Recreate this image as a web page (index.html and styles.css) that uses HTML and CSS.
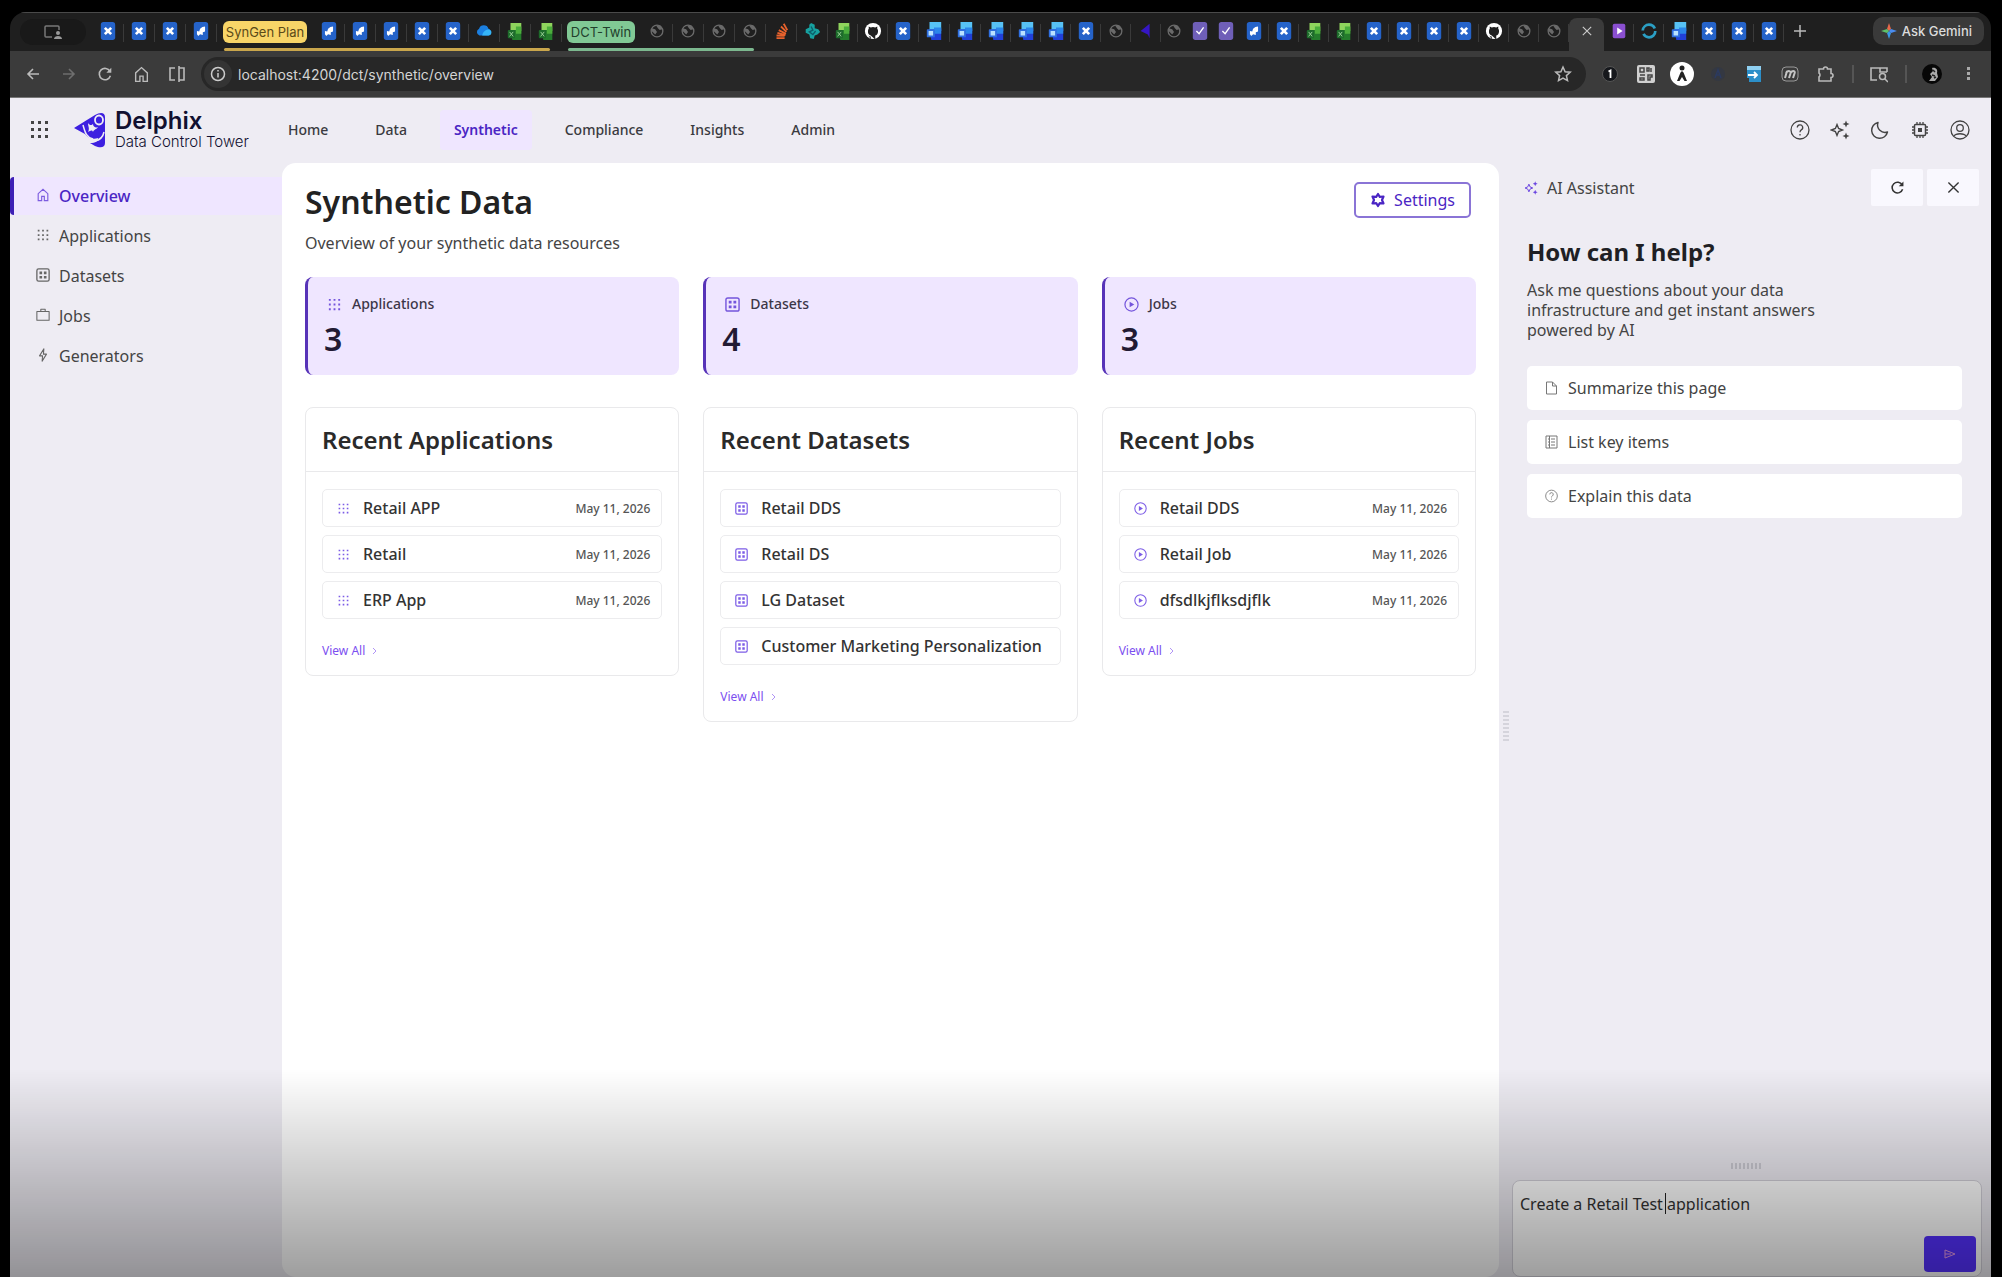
FILE: index.html
```html
<!DOCTYPE html>
<html lang="en">
<head>
  <meta charset="UTF-8">
  <meta name="viewport" content="width=device-width, initial-scale=1.0">
  <title>Synthetic Data</title>
  <link rel="stylesheet" href="styles.css">
</head>
<body>
  <svg class="sprite" aria-hidden="true">
    <symbol id="confluence" viewBox="0 0 20 20"><rect x="2" y="0" width="16" height="20" rx="3" fill="#2563c9"/><path d="M6.500 6.500l7 7M13.500 6.500l-7 7" stroke="#fff" stroke-width="3"/></symbol>
    <symbol id="jira" viewBox="0 0 20 20"><rect x="2" y="0" width="16" height="20" rx="3" fill="#2563c9"/><path d="M14.500 5v5.500l-2.500 1v3l-3-1-2 2-1.500-2v-3.500l2.500.5 1-3 2.500-2z" fill="#fff"/></symbol>
    <symbol id="cloud" viewBox="0 0 20 20"><path d="M5 15a4 4 0 0 1-.5-7.500A5.500 5.500 0 0 1 15 7.500 4 4 0 0 1 15 15z" fill="#1b7fe0"/><path d="M8 15c1-5 5-7 8.500-6.500A3.500 3.500 0 0 1 15.500 15z" fill="#35b4f7"/></symbol>
    <symbol id="sheet" viewBox="0 0 20 20"><path d="M5 1h12v9H5z" fill="#8fd45d"/><path d="M5 9h12v11H7z" fill="#247c2c"/><path d="M11 5h6v8h-6z" fill="#4cae3d"/><rect x="2" y="9" width="8" height="9" rx="1" fill="#1d6b2b"/><path d="M4 11l4 5M8 11l-4 5" stroke="#a5d8a0"/></symbol>
    <symbol id="outlook" viewBox="0 0 20 20"><path d="M5 0h13v10H5z" fill="#57c2f5"/><path d="M5 8h13v12H7z" fill="#2140d8"/><path d="M10 6h8v7h-8z" fill="#2b86ea"/><rect x="2" y="8" width="9" height="9" rx="1" fill="#2f6fe0"/><path d="M4 10h5v5H4z" fill="#b9e2ff"/></symbol>
    <symbol id="globe" viewBox="0 0 20 20"><circle cx="10" cy="10" r="6.500" fill="none" stroke="#6a6a6a" stroke-width="1.500"/><path d="M4 7l4 1 2 3-2 3-2-2-2-2zM9 4l5 0 2 4-3 1-2-2z" fill="#6a6a6a"/></symbol>
    <symbol id="stack" viewBox="0 0 20 20"><path d="M5 18h9M5 15l9 .5M6 12l9 2.500M7.500 9l8 4M10 5l6 6M13 2l4 7" stroke="#e8622c" stroke-width="2"/></symbol>
    <symbol id="hex" viewBox="0 0 20 20"><path d="M9 1l4 2v4l4 1 2 3-3 3-3 1-1 4-4-1-1-4-4-2V8l4-2V3z" fill="#17a2a0"/><path d="M9 5l2 4-4 2 4 3 3-4" fill="none" stroke="#0c5f6b" stroke-width="1.500"/></symbol>
    <symbol id="github" viewBox="0 0 20 20"><circle cx="10" cy="10" r="9" fill="#fff"/><path d="M7.500 19.500v-3.500c-2 .3-2.500-1-3-1.700M7.500 15C5 14.500 4 12.500 4.500 9.500c0-1 .5-1.500.8-2L5.200 5l2.300 1a9 9 0 0 1 5 0L14.800 5l-.1 2.500c1 1 1.200 3 .6 4.700-.5 1.600-1.500 2.400-2.800 2.800v4.500z" fill="#1f1f1f"/></symbol>
    <symbol id="delphix" viewBox="0 0 20 20"><path d="M14 2v16L12 14 4 10z" fill="#3516c4"/></symbol>
    <symbol id="check" viewBox="0 0 20 20"><rect x="2" y="0" width="16" height="20" rx="3" fill="#6f5fb8"/><path d="M6 10l3 3 5-7" fill="none" stroke="#fff" stroke-width="1.500"/></symbol>
    <symbol id="play-tab" viewBox="0 0 20 20"><rect x="3" y="2" width="14" height="16" rx="2" fill="#8a4fd0"/><path d="M8 6l6 4-6 4z" fill="#fff"/></symbol>
    <symbol id="ring" viewBox="0 0 20 20"><circle cx="10" cy="10" r="7" fill="none" stroke="#2b9fc4" stroke-width="3" stroke-dasharray="18 4"/></symbol>
    <symbol id="dots" viewBox="0 0 16 16"><path d="M2 2h2v2H2zM7 2h2v2H7zM12 2h2v2h-2zM2 7h2v2H2zM7 7h2v2H7zM12 7h2v2h-2zM2 12h2v2H2zM7 12h2v2H7zM12 12h2v2h-2z" fill="currentColor"/></symbol>
    <symbol id="dataset" viewBox="0 0 16 16"><rect x="1" y="1" width="14" height="14" rx="2" fill="none" stroke="currentColor" stroke-width="1.500"/><path d="M4 4h3v3H4zM9 4h3v3H9zM4 9h3v3H4zM9 9h3v3H9z" fill="currentColor"/></symbol>
    <symbol id="play" viewBox="0 0 16 16"><circle cx="8" cy="8" r="7" fill="none" stroke="currentColor" stroke-width="1.300"/><path d="M6 5l5 3-5 3z" fill="currentColor"/></symbol>
    <symbol id="home" viewBox="0 0 16 16"><path d="M2.500 14.500V6.500L8 1.500l5.500 5v8h-4v-5h-3v5z" fill="none" stroke="currentColor" stroke-width="1.300"/></symbol>
    <symbol id="briefcase" viewBox="0 0 16 16"><path d="M1 4h14v10H1zM5.500 4V1.500h5V4" fill="none" stroke="currentColor" stroke-width="1.200" stroke-linejoin="round"/></symbol>
    <symbol id="bolt" viewBox="0 0 16 16"><path d="M9 1L4 9h3.500L7 15l5-8H8.500z" fill="none" stroke="currentColor" stroke-width="1.200" stroke-linejoin="round"/></symbol>
    <symbol id="sparkle" viewBox="0 0 20 20"><path d="M7 4.500l1.600 3.900L12.500 10l-3.900 1.600L7 15.500l-1.600-3.900L1.500 10l3.900-1.600z" fill="none" stroke="currentColor" stroke-width="1.400"/><path d="M16 .5l1 2.500 2.500 1L17 5l-1 2.500L15 5l-2.500-1L15 3zM16 12.500l1 2.500 2.500 1-2.500 1-1 2.500-1-2.500-2.500-1 2.500-1z" fill="currentColor"/></symbol>
    <symbol id="help" viewBox="0 0 20 20"><circle cx="10" cy="10" r="9" fill="none" stroke="currentColor" stroke-width="1.300"/><path d="M7.300 7.500a2.700 2.700 0 1 1 4 2.400c-1 .6-1.300 1-1.300 2.300M10 14v1.600" fill="none" stroke="currentColor" stroke-width="1.300"/></symbol>
    <symbol id="reload" viewBox="0 0 20 20"><path d="M15.500 7A6.300 6.300 0 1 0 16 12" fill="none" stroke="currentColor" stroke-width="1.800"/><path d="M17 3v5.500h-5.500z" fill="currentColor"/></symbol>
    <symbol id="close" viewBox="0 0 20 20"><path d="M4 4l12 12M16 4L4 16" fill="none" stroke="currentColor" stroke-width="1.600"/></symbol>
  </svg>

  <div class="window">
    <div class="tab-strip">
      <button class="tab-search" aria-label="Shared tab"><svg width="18" height="16" viewBox="0 0 18 16"><path d="M8 13H2a1 1 0 0 1-1-1V3a1 1 0 0 1 1-1h12a1 1 0 0 1 1 1v3" fill="none" stroke="#777" stroke-width="1.500"/><circle cx="14" cy="9" r="2" fill="#999"/><path d="M10 15c0-4 8-4 8 0z" fill="#999"/></svg></button>
      <div class="tab-group" data-tabs="confluence confluence confluence jira"></div>
      <button class="chip chip-yellow">SynGen Plan</button>
      <div class="tab-group group-yellow" data-tabs="jira jira jira confluence confluence cloud sheet sheet"></div>
      <button class="chip chip-green">DCT-Twin</button>
      <div class="tab-group group-green" data-tabs="globe globe globe globe"></div>
      <div class="tab-group" data-tabs="stack hex"></div>
      <div class="tab-group slim" data-tabs="sheet github"></div>
      <div class="tab-group" data-tabs="confluence outlook outlook"></div>
      <div class="tab-group slim" data-tabs="outlook outlook outlook confluence globe delphix"></div>
      <div class="tab-group tight" data-tabs="globe check check"></div>
      <div class="tab-group slim" data-tabs="jira confluence sheet sheet confluence confluence confluence confluence github globe globe"></div>
      <button class="tab-active" aria-label="Close tab"><svg width="14" height="14"><use href="#close"/></svg></button>
      <div class="tab-group slim" data-tabs="play-tab ring outlook confluence confluence confluence"></div>
      <button class="tab-new" aria-label="New tab"><svg width="16" height="16" viewBox="0 0 16 16"><path d="M8 2v12M2 8h12" stroke="#bbb" stroke-width="1.500"/></svg></button>
      <button class="gemini"><svg width="16" height="16" viewBox="0 0 16 16"><path d="M8 0l2 6-2 2-2-2z" fill="#e8694a"/><path d="M16 8l-6 2-2-2 2-2z" fill="#4a8cf0"/><path d="M8 16l-2-6 2-2 2 2z" fill="#3a9ae8"/><path d="M0 8l6-2 2 2-2 2z" fill="#5fc06a"/></svg>Ask Gemini</button>
    </div>

    <div class="toolbar">
      <button class="tool" aria-label="Back"><svg width="16" height="16" viewBox="0 0 16 16"><path d="M14 8H3M8 3L3 8l5 5" fill="none" stroke="#bbb" stroke-width="1.600"/></svg></button>
      <button class="tool" aria-label="Forward"><svg width="16" height="16" viewBox="0 0 16 16"><path d="M2 8h11M8 3l5 5-5 5" fill="none" stroke="#6e6e6e" stroke-width="1.600"/></svg></button>
      <button class="tool" aria-label="Reload"><svg width="18" height="18"><use href="#reload"/></svg></button>
      <button class="tool" aria-label="Home"><svg width="17" height="17"><use href="#home"/></svg></button>
      <button class="tool" aria-label="Split view"><svg width="18" height="18" viewBox="0 0 18 18"><path d="M7 3H2v12h5M11 3h5v12h-5zM11 1v16" fill="none" stroke="#bbb" stroke-width="1.600"/></svg></button>
      <div class="address">
        <svg class="site-info" width="28" height="28" viewBox="0 0 28 28"><circle cx="14" cy="14" r="14" fill="#343434"/><circle cx="14" cy="14" r="6.500" fill="none" stroke="#ccc" stroke-width="1.500"/><path d="M14 13v4.500M14 10v1.600" stroke="#ccc" stroke-width="1.500"/></svg>
        <input type="text" aria-label="Address" value="localhost:4200/dct/synthetic/overview">
        <svg width="18" height="18" viewBox="0 0 18 18"><path d="M9 2l2.100 4.700 5.100.5-3.800 3.400 1.100 5L9 13l-4.500 2.600 1.100-5L1.800 7.200l5.100-.5z" fill="none" stroke="#bbb" stroke-width="1.500"/></svg>
      </div>
      <div class="extensions">
        <button class="tool" aria-label="Passwords"><svg width="18" height="18" viewBox="0 0 18 18"><circle cx="9" cy="9" r="7.500" fill="#16181c" stroke="#555"/><path d="M7.500 6.500L9.500 5.500V13" fill="none" stroke="#fff" stroke-width="1.800"/></svg></button>
        <button class="tool" aria-label="QR code"><svg width="18" height="18" viewBox="0 0 18 18"><rect width="18" height="18" rx="2" fill="#d0d0d0"/><path d="M3 3h4v4H3zM10 3h2v3h-2zM14 3v4M3 10h5M3 13h4v2H3zM11 10h4v2h-2v3h-2z" fill="none" stroke="#444" stroke-width="1.500"/></svg></button>
        <button class="tool" aria-label="Accessibility"><svg width="24" height="24" viewBox="0 0 24 24"><circle cx="12" cy="12" r="12" fill="#fff"/><circle cx="12" cy="6" r="2.500" fill="#222"/><path d="M12 9l1.500 1.500L17 19h-2.500L12 15l-2.500 4H7l3.500-8.500z" fill="#222"/></svg></button>
        <button class="tool" aria-label="Authenticator"><svg width="18" height="18" viewBox="0 0 18 18"><circle cx="9" cy="9" r="7" fill="#343842"/><path d="M6 13l3-8 3 8M7 10h4" fill="none" stroke="#2b3a60" stroke-width="1.500"/></svg></button>
        <button class="tool" aria-label="Share page"><svg width="18" height="18" viewBox="0 0 18 18"><path d="M2 1h14v16H4v-4H2z" fill="#2c8fc9"/><path d="M2 1h14v4H2z" fill="#8fd0f2"/><path d="M3 10h9M9 7l3 3-3 3" fill="none" stroke="#fff" stroke-width="1.800"/></svg></button>
        <button class="tool" aria-label="Notes"><svg width="18" height="18" viewBox="0 0 18 18"><rect x="1" y="2" width="16" height="14" rx="4" fill="none" stroke="#999"/><path d="M4 13L6 6M8 13l2-6M12 13l2-6M5 8c2-3 4-2 4.500-1M9.500 8c2-3 4-2 4.500-1" fill="none" stroke="#c4c4c4" stroke-width="2"/></svg></button>
        <button class="tool" aria-label="Extensions"><svg width="18" height="18" viewBox="0 0 18 18"><path d="M2 4h4.500a2 2 0 0 1 4 0H14v4.500a2 2 0 0 1 0 4V16H2v-4a2.500 2.500 0 0 0 0-4z" fill="none" stroke="#bbb" stroke-width="1.600"/></svg></button>
        <span class="divider"></span>
        <button class="tool" aria-label="Search tabs"><svg width="18" height="18" viewBox="0 0 18 18"><path d="M7 15H1V3h16v4M10 3v4h7" fill="none" stroke="#bbb" stroke-width="1.600"/><circle cx="12.500" cy="11.500" r="3" fill="none" stroke="#bbb" stroke-width="1.500"/><path d="M14.500 13.500L18 17" stroke="#bbb" stroke-width="1.500"/></svg></button>
        <span class="divider"></span>
        <button class="tool" aria-label="Profile"><svg width="20" height="20" viewBox="0 0 20 20"><circle cx="10" cy="10" r="10" fill="#070707"/><path d="M10 4c4-1 6 2 5 5l1 4-3 4H7l3-4-2-3 3-3z" fill="#aaa"/><path d="M11 6l2 2M10 11l3 1M12 14l2-1" stroke="#222" stroke-width="1.500"/></svg></button>
        <button class="tool" aria-label="Menu"><svg width="16" height="18" viewBox="0 0 16 18"><path d="M7 2h3v3H7zM7 7h3v3H7zM7 12h3v3H7z" fill="#aaa"/></svg></button>
      </div>
    </div>

    <div class="app">
      <header class="app-header">
        <button class="icon-btn" aria-label="Apps"><svg width="18" height="20" viewBox="0 0 18 20"><path d="M0 1h3v3H0zM7 1h3v3H7zM14 1h3v3h-3zM0 8h3v3H0zM7 8h3v3H7zM14 8h3v3h-3zM0 15h3v3H0zM7 15h3v3H7zM14 15h3v3h-3z" fill="#444"/></svg></button>
        <a class="brand" href="#">
          <svg width="33" height="36" viewBox="0 0 33 36"><path d="M1 16L22 3C27 0 32 0 32 5v26c0 5-5 5-10 3l-5-3c6 0 8-2 8-5-5 2-10 0-13-4z" fill="#3d1fe0"/><path d="M10 13c2 7 3 12 10 14" fill="none" stroke="#eeecf3" stroke-width="1.500"/><ellipse cx="26" cy="8" rx="4" ry="4.500" fill="#3d1fe0" stroke="#eeecf3" stroke-width="1.800"/><path d="M15 11c2 3 4 2 5 1 0 3 3 4 5 3-2 3-4 2-5 5-1-3-3-1-5 0 2-4 0-5 0-9z" fill="#eeecf3"/><path d="M22 29c5-1 8-4 9-9" fill="none" stroke="#eeecf3" stroke-width="1.500"/></svg>
          <span class="brand-text"><span class="brand-name">Delphix</span><span class="brand-sub">Data Control Tower</span></span>
        </a>
        <nav class="top-nav">
          <a href="#">Home</a>
          <a href="#">Data</a>
          <a href="#" class="active">Synthetic</a>
          <a href="#">Compliance</a>
          <a href="#">Insights</a>
          <a href="#">Admin</a>
        </nav>
        <div class="header-icons">
          <button class="icon-btn" aria-label="Help"><svg width="20" height="20"><use href="#help"/></svg></button>
          <button class="icon-btn" aria-label="AI Assistant"><svg width="20" height="20"><use href="#sparkle"/></svg></button>
          <button class="icon-btn" aria-label="Dark mode"><svg width="20" height="20" viewBox="0 0 20 20"><path d="M8 2.500A8 8 0 1 0 17.500 12 7.500 7.500 0 0 1 8 2.500z" fill="none" stroke="currentColor" stroke-width="1.400" stroke-linejoin="round"/></svg></button>
          <button class="icon-btn" aria-label="System"><svg width="20" height="20" viewBox="0 0 20 20"><rect x="4.500" y="4.500" width="11" height="11" rx="1" fill="none" stroke="currentColor" stroke-width="1.500"/><path d="M8 8h4v4H8z" fill="currentColor"/><path d="M7 2v3M10 2v3M13 2v3M7 15v3M10 15v3M13 15v3M2 7h3M2 10h3M2 13h3M15 7h3M15 10h3M15 13h3" stroke="currentColor" stroke-width="1.300"/></svg></button>
          <button class="icon-btn" aria-label="Account"><svg width="20" height="20" viewBox="0 0 20 20"><circle cx="10" cy="10" r="9" fill="none" stroke="currentColor" stroke-width="1.300"/><circle cx="10" cy="8" r="3.300" fill="none" stroke="currentColor" stroke-width="1.300"/><path d="M4 16c2-3 10-3 12 0" fill="none" stroke="currentColor" stroke-width="1.300"/></svg></button>
        </div>
      </header>

      <div class="app-body">
        <nav class="sidebar">
          <a href="#" class="active"><svg width="14" height="14"><use href="#home"/></svg>Overview</a>
          <a href="#"><svg width="14" height="14"><use href="#dots"/></svg>Applications</a>
          <a href="#"><svg width="14" height="14"><use href="#dataset"/></svg>Datasets</a>
          <a href="#"><svg width="14" height="14"><use href="#briefcase"/></svg>Jobs</a>
          <a href="#"><svg width="14" height="14"><use href="#bolt"/></svg>Generators</a>
        </nav>

        <main class="content">
          <div class="page-head">
            <div>
              <h1>Synthetic Data</h1>
              <p class="subtitle">Overview of your synthetic data resources</p>
            </div>
            <button class="settings"><svg width="16" height="18" viewBox="0 0 16 18"><path d="M8 3l1.800 2.800 3.700-.3L12 9l1.500 3.500-3.700-.3L8 15l-1.800-2.800-3.700.3L4 9 2.500 5.500l3.700.3z" fill="none" stroke="currentColor" stroke-width="2.200" stroke-linejoin="round"/></svg>Settings</button>
          </div>

          <div class="grid">
            <div class="stat"><div class="stat-label"><svg width="15" height="15"><use href="#dots"/></svg>Applications</div><div class="stat-value">3</div></div>
            <div class="stat"><div class="stat-label"><svg width="15" height="15"><use href="#dataset"/></svg>Datasets</div><div class="stat-value">4</div></div>
            <div class="stat"><div class="stat-label"><svg width="15" height="15"><use href="#play"/></svg>Jobs</div><div class="stat-value">3</div></div>
          </div>

          <div class="grid recent">
            <section class="card">
              <h2>Recent Applications</h2>
              <ul>
                <li><svg width="13" height="13"><use href="#dots"/></svg>Retail APP<time>May 11, 2026</time></li>
                <li><svg width="13" height="13"><use href="#dots"/></svg>Retail<time>May 11, 2026</time></li>
                <li><svg width="13" height="13"><use href="#dots"/></svg>ERP App<time>May 11, 2026</time></li>
              </ul>
              <a class="view-all" href="#">View All<svg width="6" height="8" viewBox="0 0 6 8"><path d="M1 1l3 3-3 3" fill="none" stroke="currentColor"/></svg></a>
            </section>
            <section class="card">
              <h2>Recent Datasets</h2>
              <ul>
                <li><svg width="13" height="13"><use href="#dataset"/></svg>Retail DDS</li>
                <li><svg width="13" height="13"><use href="#dataset"/></svg>Retail DS</li>
                <li><svg width="13" height="13"><use href="#dataset"/></svg>LG Dataset</li>
                <li><svg width="13" height="13"><use href="#dataset"/></svg>Customer Marketing Personalization</li>
              </ul>
              <a class="view-all" href="#">View All<svg width="6" height="8" viewBox="0 0 6 8"><path d="M1 1l3 3-3 3" fill="none" stroke="currentColor"/></svg></a>
            </section>
            <section class="card">
              <h2>Recent Jobs</h2>
              <ul>
                <li><svg width="13" height="13"><use href="#play"/></svg>Retail DDS<time>May 11, 2026</time></li>
                <li><svg width="13" height="13"><use href="#play"/></svg>Retail Job<time>May 11, 2026</time></li>
                <li><svg width="13" height="13"><use href="#play"/></svg>dfsdlkjflksdjflk<time>May 11, 2026</time></li>
              </ul>
              <a class="view-all" href="#">View All<svg width="6" height="8" viewBox="0 0 6 8"><path d="M1 1l3 3-3 3" fill="none" stroke="currentColor"/></svg></a>
            </section>
          </div>
        </main>

        <div class="resizer"><span class="grip"></span></div>

        <aside class="assistant">
          <div class="assistant-head">
            <svg width="14" height="14"><use href="#sparkle"/></svg>
            <span class="assistant-title">AI Assistant</span>
            <button class="square" aria-label="Restart"><svg width="17" height="17"><use href="#reload"/></svg></button>
            <button class="square" aria-label="Close"><svg width="17" height="17"><use href="#close"/></svg></button>
          </div>
          <div class="assistant-body">
            <h2>How can I help?</h2>
            <p>Ask me questions about your data infrastructure and get instant answers powered by AI</p>
            <button class="prompt"><svg width="13" height="14" viewBox="0 0 13 14"><path d="M1.500 1h6l4 4v8h-10zM7.500 1v4h4" fill="none" stroke="currentColor"/></svg>Summarize this page</button>
            <button class="prompt"><svg width="13" height="14" viewBox="0 0 13 14"><path d="M1 1h11v12H1zM3 4h1M3 7h1M3 10h1M6 4h4M6 7h4M6 10h4M4.500 1v12" fill="none" stroke="currentColor"/></svg>List key items</button>
            <button class="prompt"><svg width="13" height="14"><use href="#help"/></svg>Explain this data</button>
          </div>
          <span class="grip grip-wide"></span>
          <div class="composer">
            <textarea aria-label="Message">Create a Retail Test application</textarea>
            <span class="caret"></span>
            <button class="send" aria-label="Send"><svg width="12" height="10" viewBox="0 0 12 10"><path d="M1 1l10 4L1 9zM1 5h6" fill="none" stroke="#e79ae8"/></svg></button>
          </div>
        </aside>
      </div>
    </div>
  </div>
  <div class="shade"></div>

  <script>
    // fill each tab group from its list of favicons
    document.querySelectorAll('.tab-group').forEach(group => {
      group.innerHTML = group.dataset.tabs.split(' ').map(name =>
        `<button class="tab" aria-label="${name}"><svg width="20" height="20"><use href="#${name}"/></svg></button>`
      ).join('');
    });
  </script>
</body>
</html>
```
FILE: styles.css
```css
* { box-sizing: border-box; }
body { margin: 0; background: #000; color: #2b2b2f; font-family: "Noto Sans", sans-serif; font-size: 16px; padding: 12px 11px 0 10px; height: 100vh; overflow: hidden; }
button { font: inherit; border: none; background: none; padding: 0; color: inherit; cursor: pointer; }
a { color: inherit; text-decoration: none; }
svg { flex: none; display: block; }
.sprite { position: absolute; width: 0; height: 0; }
.window { height: 100%; display: flex; flex-direction: column; border-radius: 16px 16px 0 0; overflow: hidden; background: #1f1f1f; }

/* browser chrome */
.tab-strip { display: flex; height: 39px; border-top: 1px solid #4a4a4a; font-family: Inter, sans-serif; }
.tab-search { width: 66px; height: 26px; margin: 6px 7px 0 10px; border-radius: 13px; background: #191919; display: flex; align-items: center; justify-content: center; }
.tab-group { display: flex; }
.tab { width: 31px; display: flex; align-items: center; justify-content: center; padding-bottom: 3px; border-right: 1px solid #333; border-image: linear-gradient(transparent 30%, #3a3a3a 30%, #3a3a3a 75%, transparent 75%) 1; }
.tab svg { width: 18px; height: 20px; }
.slim .tab { width: 30px; }
.tight .tab { width: 26px; border-color: transparent; border-image: none; }
.group-yellow, .group-green { position: relative; }
.group-yellow::after, .group-green::after { content: ""; position: absolute; bottom: 0; left: -90px; right: 12px; height: 3px; border-radius: 2px; background: #c9a64c; }
.group-green::after { left: -74px; background: #7cb88f; }
.chip { height: 22px; margin-top: 8px; border-radius: 6px; font-size: 13px; line-height: 22px; color: #5b4a18; white-space: nowrap; }
.chip-yellow { width: 84px; margin-left: 6px; margin-right: 7px; background: #f8d568; }
.chip-green { width: 68px; margin-left: 5px; margin-right: 7px; background: #81c995; color: #22402c; }
.tab-active { width: 35px; height: 34px; margin-top: 5px; border-radius: 8px 8px 0 0; background: #3b3b3b; color: #ccc; display: flex; align-items: center; justify-content: center; padding-bottom: 8px; }
.tab-new { width: 32px; display: flex; align-items: center; justify-content: center; padding-bottom: 3px; }
.gemini { display: flex; align-items: center; gap: 5px; height: 28px; margin: 4px 7px 0 auto; padding: 0 12px 0 8px; border-radius: 10px; background: #3a3a3a; color: #dcdcdc; font-size: 13px; font-weight: 500; white-space: nowrap; }
.toolbar { display: flex; align-items: center; height: 47px; flex: none; padding: 0 11px; gap: 12px; background: #3b3b3b; color: #bbb; border-bottom: 1px solid #777; }
.tool { width: 24px; height: 24px; display: flex; align-items: center; justify-content: center; }
.address { flex: 1; display: flex; align-items: center; height: 34px; padding: 0 14px 0 3px; border-radius: 17px; background: #272727; }
.address input { flex: 1; border: none; outline: none; background: none; color: #d4d4d4; font-family: Inter, sans-serif; font-size: 14px; padding: 0 6px; }
.extensions { display: flex; align-items: center; gap: 12px; }
.divider { width: 2px; height: 18px; margin: 0 1px 0 2px; background: #555; }

/* app header */
.app { flex: 1; min-height: 0; display: flex; flex-direction: column; background: #eeecf3; }
.app-header { display: flex; align-items: center; height: 65px; flex: none; padding: 0 21px 1px; }
.icon-btn { display: flex; align-items: center; justify-content: center; color: #444; }
.brand { display: flex; align-items: center; gap: 9px; margin-left: 24px; }
.brand-text { display: flex; flex-direction: column; font-family: Inter, sans-serif; color: #111030; }
.brand-name { font-size: 24px; font-weight: 600; line-height: 24px; }
.brand-sub { font-size: 15px; line-height: 18px; font-weight: 300; }
.top-nav { display: flex; gap: 19px; margin-left: 25px; font-size: 14px; font-weight: 500; color: #3a3a40; }
.top-nav a { padding: 0 14px; line-height: 40px; border-radius: 4px; }
.top-nav .active { color: #4a25c4; font-weight: 600; background: #efe6ff; }
.header-icons { display: flex; gap: 20px; margin-left: auto; }

/* layout */
.app-body { flex: 1; min-height: 0; display: flex; }
.sidebar { width: 272px; flex: none; display: flex; flex-direction: column; gap: 2px; padding-top: 14px; color: #444; }
.sidebar a { display: flex; align-items: center; gap: 9px; height: 38px; padding-left: 22px; border-left: 4px solid transparent; }
.sidebar svg { color: #666; margin-bottom: 2px; }
.sidebar .active { color: #4a25c4; font-weight: 500; background: #efe6ff; border-left-color: #3d1fb5; border-radius: 4px 0 0 4px; }
.sidebar .active svg { color: #7c5ce0; }
.content { flex: 1; min-width: 0; background: #fff; border-radius: 14px; padding: 19px 23px; }

.page-head { display: flex; justify-content: space-between; align-items: flex-start; padding-right: 5px; }
h1 { margin: 0; font-size: 32px; font-weight: 600; line-height: 40px; color: #222; }
.subtitle { margin: 10px 0 0; line-height: 22px; color: #444; }
.settings { display: flex; align-items: center; gap: 8px; height: 36px; padding: 0 14px; border: 2px solid #8a74d6; border-radius: 5px; color: #4a25c4; font-weight: 400; background: #fff; }

.grid { display: grid; grid-template-columns: repeat(3, 1fr); gap: 24px; align-items: start; margin-top: 23px; }
.recent { margin-top: 32px; }
.stat { height: 98px; padding: 16px 16px 0; background: #efe6ff; border-left: 3px solid #5733b8; border-radius: 8px; color: #221a33; }
.stat-label { display: flex; align-items: center; gap: 10px; padding-left: 3px; font-size: 14px; font-weight: 500; line-height: 22px; color: #3c3648; }
.stat-label svg { color: #7455dc; }
.stat-value { font-size: 32px; font-weight: 600; line-height: 40px; margin-top: 4px; }

.card { border: 1px solid #e9e9eb; border-radius: 8px; }
.card h2 { margin: 0; padding: 0 16px; font-size: 24px; font-weight: 600; line-height: 63px; border-bottom: 1px solid #e9e9eb; color: #2a2a2a; }
.card ul { list-style: none; margin: 0; padding: 17px 16px 0; display: flex; flex-direction: column; gap: 8px; }
.card li { display: flex; align-items: center; gap: 13px; height: 38px; padding: 0 11px 0 14px; border: 1px solid #ececee; border-radius: 5px; font-weight: 500; white-space: nowrap; color: #333; }
.card li svg { color: #7c5ce6; }
time { margin-left: auto; font-size: 12px; color: #555; }
.view-all { display: flex; align-items: center; gap: 7px; padding: 22px 16px 14px; font-size: 12px; line-height: 20px; color: #7c4ff0; }
.view-all svg { opacity: 0.6; }

/* assistant */
.resizer { width: 13px; flex: none; display: flex; align-items: center; justify-content: center; padding-top: 12px; }
.grip { width: 6px; height: 30px; background: repeating-linear-gradient(#d5d4dc 0 2px, transparent 2px 4px); }
.grip-wide { width: 32px; height: 6px; margin: auto auto 11px; background: repeating-linear-gradient(90deg, #cfced6 0 2px, transparent 2px 4px); }
.assistant { width: 479px; flex: none; display: flex; flex-direction: column; padding-right: 9px; color: #444; }
.assistant-head { display: flex; align-items: center; padding: 6px 3px 0 12px; }
.assistant-head > svg { color: #6a45e0; }
.assistant-title { margin: 0 auto 0 9px; }
.square { width: 52px; height: 37px; margin-left: 4px; display: flex; align-items: center; justify-content: center; background: #f9f8fe; border-radius: 2px; color: #333; }
.assistant-body { padding: 28px 20px 0 15px; }
.assistant-body h2 { margin: 0; font-size: 24px; font-weight: 700; line-height: 36px; color: #1f1f24; }
.assistant-body p { width: 300px; margin: 10px 0 26px; line-height: 20px; }
.prompt { display: flex; align-items: center; gap: 10px; width: 100%; height: 44px; margin-bottom: 10px; padding: 0 18px; border-radius: 5px; background: #fff; }
.prompt svg { color: #777; }
.composer { position: relative; height: 97px; border: 1px solid #d2d0d9; border-radius: 8px; background: #fff; flex: none; }
.composer textarea { display: block; width: 100%; height: 95px; padding: 12px 7px; border: none; outline: none; resize: none; background: none; font: inherit; line-height: 22px; color: #333; }
.caret { position: absolute; left: 152px; top: 12px; width: 1px; height: 21px; background: #222; }
.send { position: absolute; right: 5px; bottom: 4px; width: 52px; height: 36px; border-radius: 4px; background: #5531ff; display: flex; align-items: center; justify-content: center; }

.shade { position: fixed; left: 0; right: 0; bottom: 0; height: 208px; background: linear-gradient(rgba(0, 0, 0, 0), rgba(0, 0, 0, 0.38)); pointer-events: none; }
```
